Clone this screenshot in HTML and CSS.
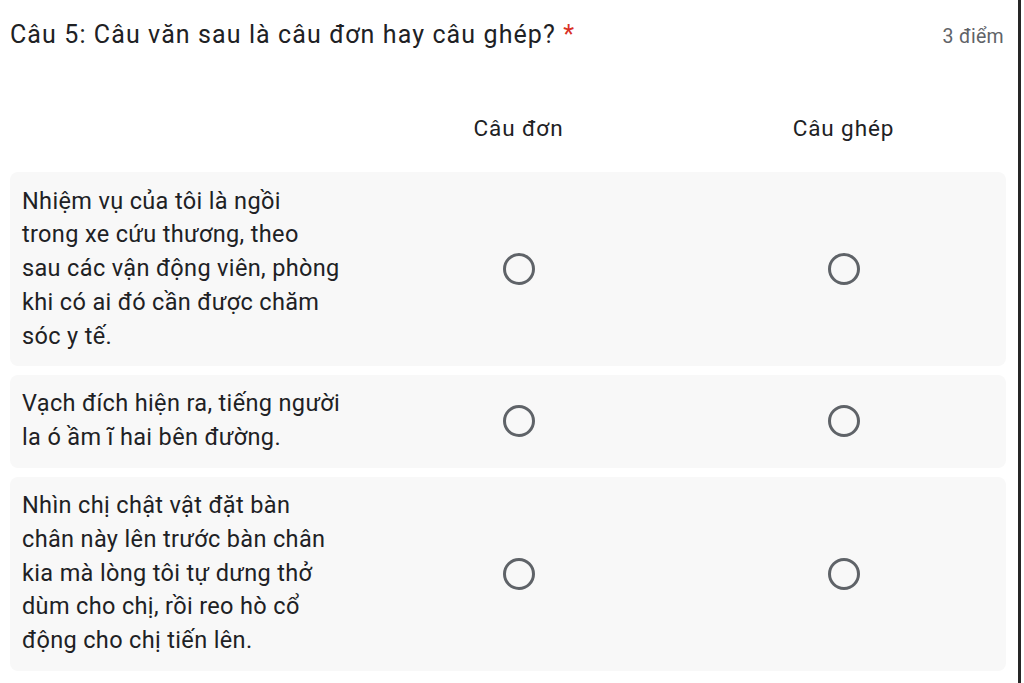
FILE: index.html
```html
<!DOCTYPE html>
<html lang="vi">
<head>
<meta charset="utf-8">
<title>Câu 5</title>
<link rel="stylesheet" href="styles.css">
</head>
<body>
<div class="page">
  <div class="question-head">
    <div class="title">Câu 5: Câu văn sau là câu đơn hay câu ghép? <span class="req">*</span></div>
    <div class="points">3 điểm</div>
  </div>
  <div class="grid">
    <div class="header-row">
      <div class="label-cell"></div>
      <div class="col-head">Câu đơn</div>
      <div class="col-head">Câu ghép</div>
    </div>
    <div class="row">
      <div class="label-cell">Nhiệm vụ của tôi là ngồi<br>trong xe cứu thương, theo<br>sau các vận động viên, phòng<br>khi có ai đó cần được chăm<br>sóc y tế.</div>
      <div class="cell"><span class="radio"></span></div>
      <div class="cell"><span class="radio"></span></div>
    </div>
    <div class="row">
      <div class="label-cell">Vạch đích hiện ra, tiếng người<br>la ó ầm ĩ hai bên đường.</div>
      <div class="cell"><span class="radio"></span></div>
      <div class="cell"><span class="radio"></span></div>
    </div>
    <div class="row">
      <div class="label-cell">Nhìn chị chật vật đặt bàn<br>chân này lên trước bàn chân<br>kia mà lòng tôi tự dưng thở<br>dùm cho chị, rồi reo hò cổ<br>động cho chị tiến lên.</div>
      <div class="cell"><span class="radio"></span></div>
      <div class="cell"><span class="radio"></span></div>
    </div>
  </div>
</div>
</body>
</html>
```
FILE: styles.css
```css
html, body {
  margin: 0;
  padding: 0;
  background: #ffffff;
}
body {
  font-family: Roboto, "Liberation Sans", Arial, sans-serif;
  color: #202124;
}
.page {
  width: 1021px;
  height: 683px;
  box-sizing: border-box;
  border-right: 3px solid #262626;
  padding: 18px 0 0 10px;
  overflow: hidden;
}
.question-head {
  display: flex;
  justify-content: space-between;
  align-items: flex-start;
  padding-right: 14px;
}
.title {
  font-size: 25px;
  line-height: 34px;
  letter-spacing: 1.1px;
}
.req {
  color: #d93025;
}
.points {
  font-size: 19.5px;
  line-height: 34px;
  letter-spacing: 0.3px;
  color: #5f6368;
  padding-top: 2px;
}
.grid {
  margin-top: 39px;
  width: 996px;
  display: flex;
  flex-direction: column;
  gap: 9px;
}
.header-row, .row {
  display: grid;
  grid-template-columns: 346px 325px 325px;
  align-items: center;
}
.header-row {
  height: 70px;
}
.col-head {
  text-align: center;
  font-size: 22.5px;
  letter-spacing: 0.9px;
  color: #202124;
}
.row {
  background: #f8f8f8;
  border-radius: 8px;
  padding: 12.5px 0;
}
.row .label-cell {
  padding: 0 0 0 12px;
  font-size: 23.5px;
  line-height: 33.8px;
  letter-spacing: 0.35px;
  white-space: nowrap;
}
.cell {
  display: flex;
  justify-content: center;
}
.radio {
  width: 26px;
  height: 26px;
  border: 3px solid #5f6368;
  border-radius: 50%;
  display: block;
}
```
